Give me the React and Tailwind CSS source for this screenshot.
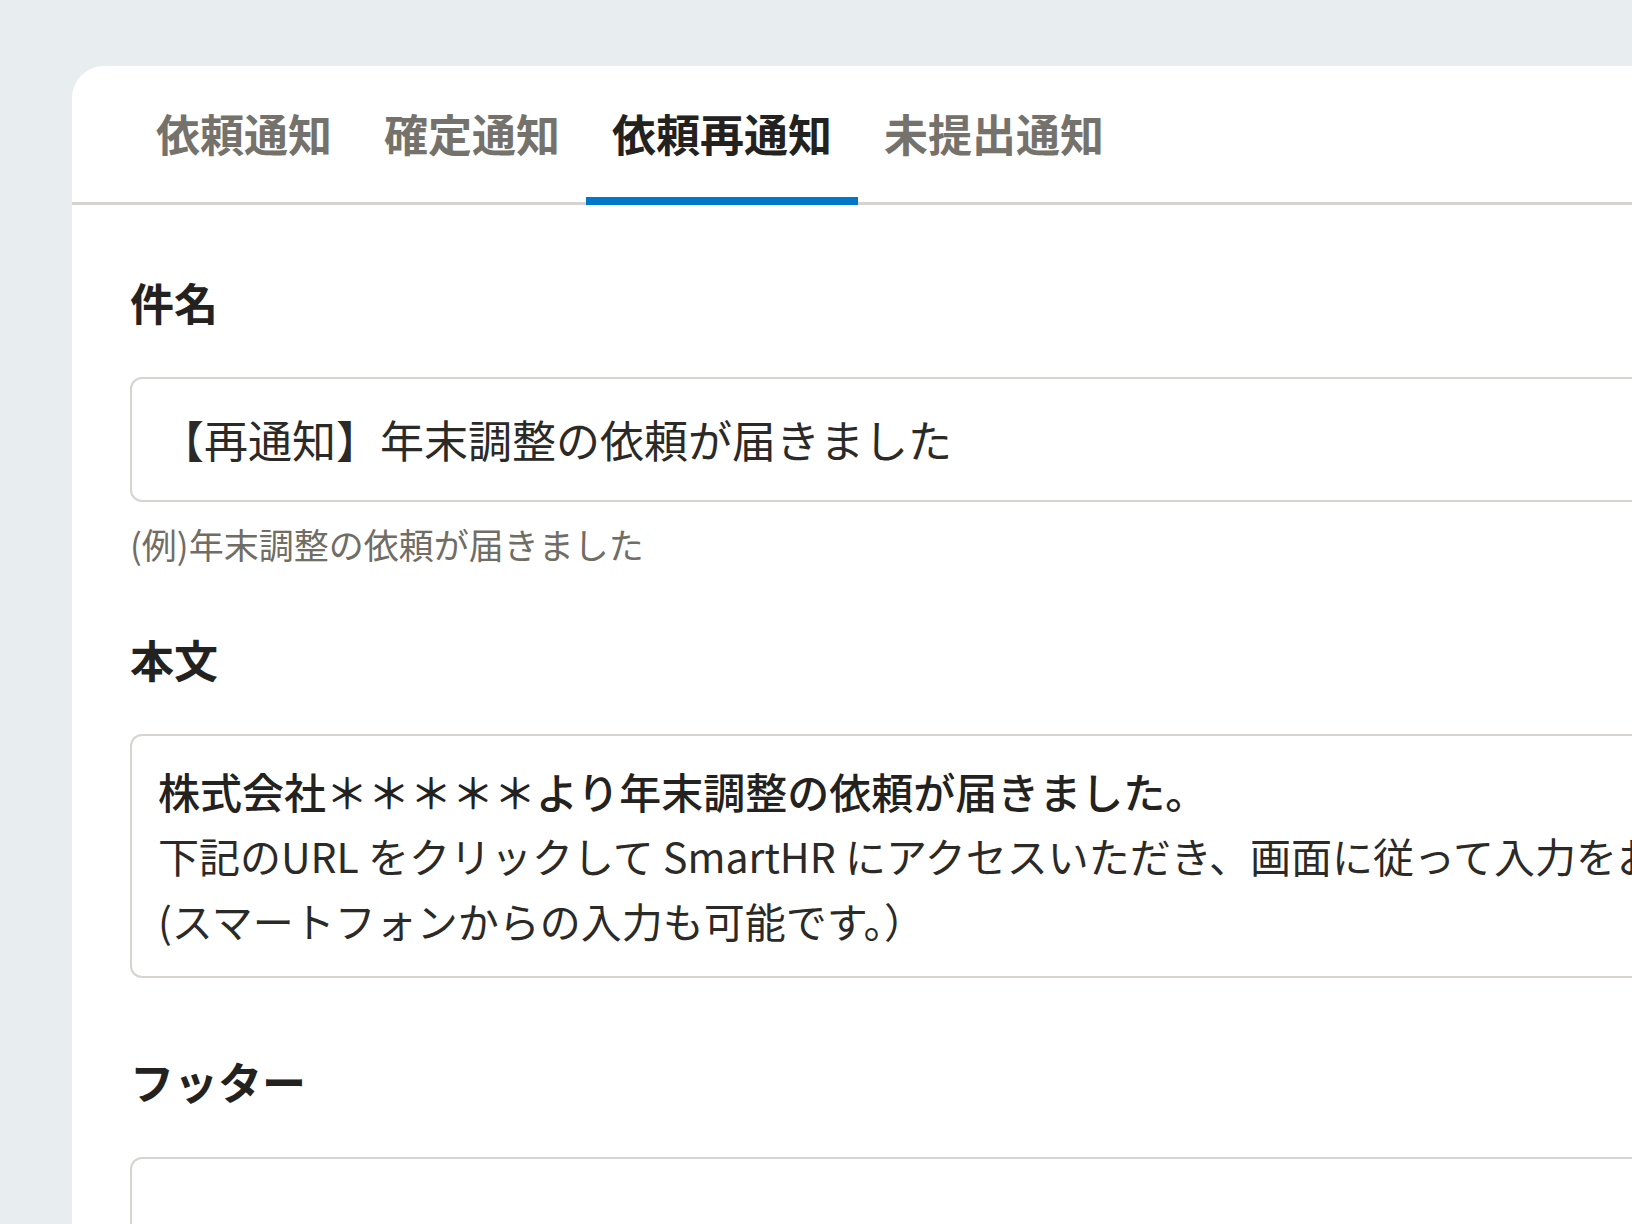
import React from "react";

const tabs = ["依頼通知", "確定通知", "依頼再通知", "未提出通知"];

export default function App() {
  return (
    <div
      className="w-full h-[1224px] overflow-hidden bg-[#e8edf0]"
      style={{ fontFamily: '"Noto Sans CJK JP", "Noto Sans", sans-serif' }}
    >
      <div className="ml-[72px] mt-[66px] w-[1800px] h-[1300px] bg-white rounded-tl-[32px]">
        {/* Tabs */}
        <div className="flex pl-[58px] border-b-[3px] border-[#d6d3d0]">
          {tabs.map((t, i) => {
            const active = i === 2;
            return (
              <div
                key={t}
                className={
                  active
                    ? "-mb-[3px] px-[26px] pt-[34px] pb-[31px] text-[44px] leading-[66px] font-bold text-[#23221e] border-b-[8px] border-[#0077c7]"
                    : "-mb-[3px] px-[26px] pt-[34px] pb-[31px] text-[44px] leading-[66px] font-bold text-[#74726b] border-b-[8px] border-transparent"
                }
              >
                {t}
              </div>
            );
          })}
        </div>

        {/* Form */}
        <div className="pl-[58px] pr-[58px] pt-[67px] flex flex-col">
          <div className="text-[44px] leading-[60px] font-bold text-[#23221e]">件名</div>
          <div className="mt-[45px] h-[125px] border-2 border-[#d6d3d0] rounded-[12px] pl-[28px] flex items-center">
            <span className="text-[44px] leading-[65px] text-[#2b2a27] whitespace-nowrap">
              【再通知】年末調整の依頼が届きました
            </span>
          </div>
          <div className="mt-[17px] text-[35px] leading-[50px] text-[#706d65] whitespace-nowrap">
            (例)年末調整の依頼が届きました
          </div>

          <div className="mt-[60px] text-[44px] leading-[60px] font-bold text-[#23221e]">本文</div>
          <div className="mt-[45px] border-2 border-[#d6d3d0] rounded-[12px] pl-[26px] pt-[22px] pb-[23px] whitespace-nowrap text-[#23221e] overflow-hidden">
            <div className="text-[42px] leading-[65px] font-medium">
              株式会社＊＊＊＊＊より年末調整の依頼が届きました。
            </div>
            <div className="text-[41px] leading-[65px] text-[#2b2a27]">
              下記のURL をクリックして SmartHR にアクセスいただき、画面に従って入力をお願いします。
            </div>
            <div className="text-[41px] leading-[65px] text-[#2b2a27]">
              (スマートフォンからの入力も可能です。）
            </div>
          </div>

          <div className="mt-[73px] text-[44px] leading-[60px] font-bold text-[#23221e]">フッター</div>
          <div className="mt-[46px] h-[220px] border-2 border-[#d6d3d0] rounded-[12px]"></div>
        </div>
      </div>
    </div>
  );
}
